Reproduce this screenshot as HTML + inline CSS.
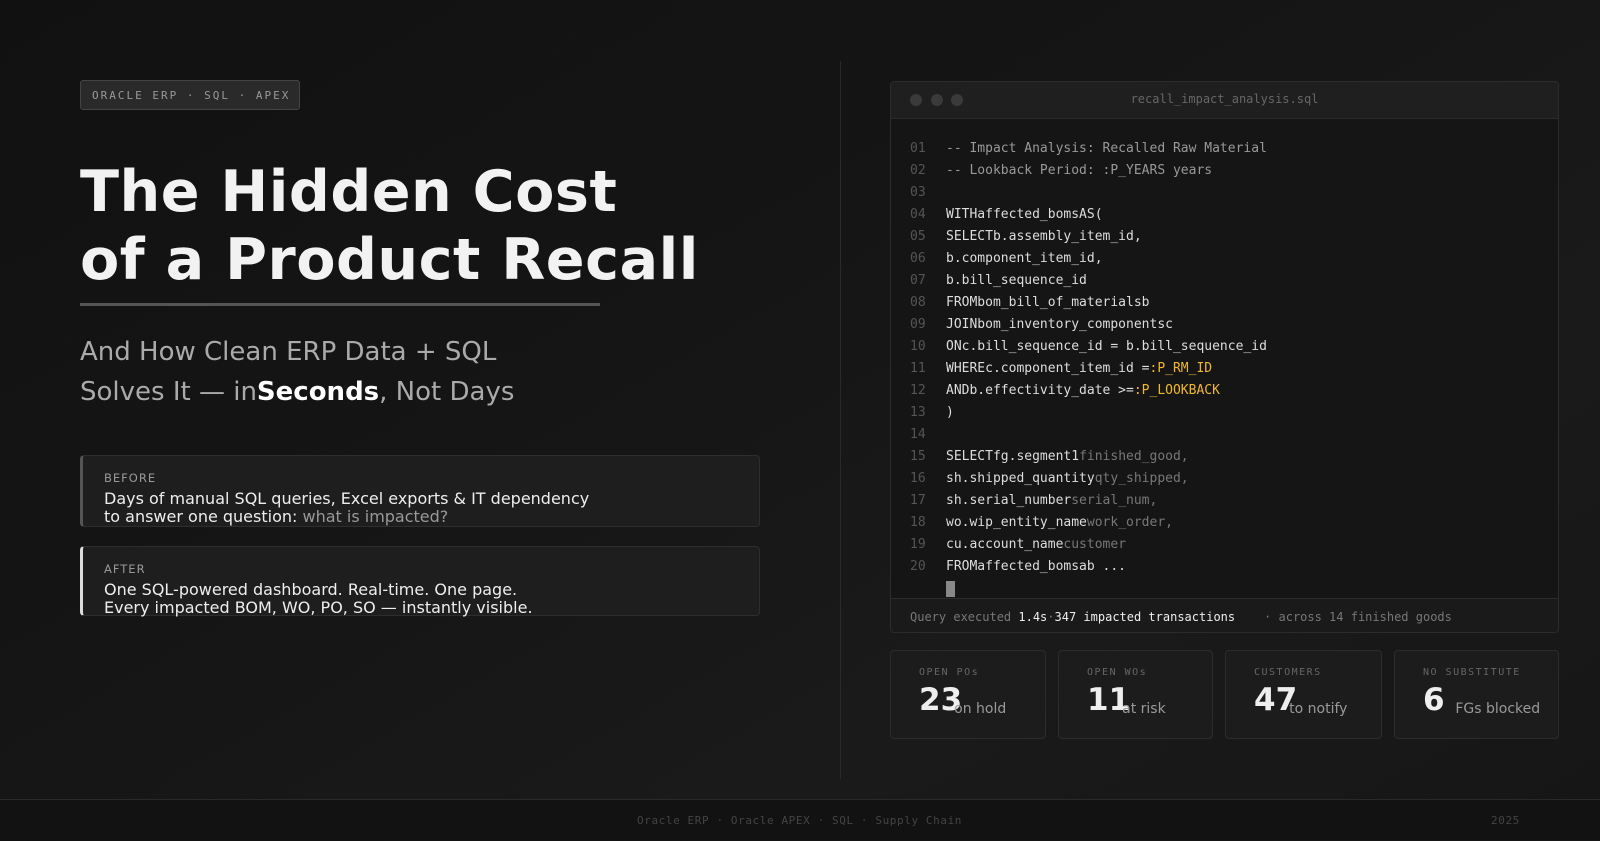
<!DOCTYPE html>
<html><head><meta charset="utf-8"><style>
*{margin:0;padding:0;box-sizing:border-box}
body{width:1600px;height:840px;overflow:hidden;background:linear-gradient(150deg,#111 0%,#151515 40%,#1a1a1a 70%,#161616 100%);font-family:"DejaVu Sans","Liberation Sans",sans-serif;color:#eee;position:relative}
.abs{position:absolute}
.mono{font-family:"DejaVu Sans Mono","Liberation Mono",monospace}
.badge{left:80px;top:80px;width:220px;height:30px;border:1px solid #444;background:#2a2a2a;border-radius:3px;color:#999;font-size:11px;letter-spacing:2.0px;line-height:29px;padding-left:11px;white-space:nowrap}
h1{position:absolute;left:80px;top:158px;font-size:57.2px;font-weight:bold;line-height:68px;color:#f2f2f2;letter-spacing:0.5px;white-space:nowrap}
.rule{left:80px;top:303px;width:520px;height:3px;background:#555}
.sub{left:80px;top:332px;font-size:26px;line-height:40px;color:#aaa}
.sub b{color:#fff}
.box{left:80px;width:680px;border:1px solid #2e2e2e;border-radius:4px;background:#1e1e1e;padding:15px 0 0 21px}
.box .l{font-size:11.5px;letter-spacing:1px;color:#999;margin-bottom:5px}
.box .t{font-size:16px;line-height:18px;color:#eee}
.div{left:840px;top:61px;width:1px;height:718px;background:#2a2a2a}
.win{left:890px;top:81px;width:669px;height:552px;border:1px solid #2c2c2c;border-radius:4px;background:#151515;overflow:hidden}
.hdr{height:37px;background:#1f1f1f;border-bottom:1px solid #2a2a2a;position:relative}
.dot{position:absolute;top:12px;width:12px;height:12px;border-radius:50%;background:#3a3a3a}
.code{position:absolute;left:19px;top:56px;font-size:13px;line-height:22px;color:#ddd;white-space:pre}
.code .n{color:#555;display:inline-block;width:36px}
.code .c{color:#999}.code .y{color:#f0b830}.code .g{color:#777}
.stat{position:absolute;left:0;top:516px;width:669px;height:36px;border-top:1px solid #2c2c2c;background:#1a1a1a;font-size:12px;line-height:36px;padding-left:19px;color:#777;white-space:pre}
.stat b{color:#eee;font-weight:normal}
.card{top:650px;height:89px;border:1px solid #2c2c2c;border-radius:4px;background:#1c1c1c;padding:16px 0 0 28px}
.card .l{font-size:10px;letter-spacing:1.5px;color:#666;font-family:"DejaVu Sans Mono",monospace}
.card .v{font-size:31px;font-weight:bold;color:#eee;margin-top:4px;white-space:nowrap}
.card .v span{font-size:14px;font-weight:normal;color:#999;position:relative;top:3px}
.foot{left:0;top:799px;width:1600px;height:41px;border-top:1px solid #2a2a2a;background:#121212;font-size:11px;color:#444;line-height:41px;letter-spacing:0.6px}
</style></head><body>
<div class="abs badge mono">ORACLE ERP · SQL · APEX</div>
<h1>The Hidden Cost<br>of a Product Recall</h1>
<div class="abs rule"></div>
<div class="abs sub">And How Clean ERP Data + SQL<br>Solves It — in<b>Seconds</b>, Not Days</div>
<div class="abs box" style="top:455px;height:72px;border-left:3px solid #555"><div class="l">BEFORE</div><div class="t">Days of manual SQL queries, Excel exports &amp; IT dependency<br>to answer one question: <span style="color:#999">what is impacted?</span></div></div>
<div class="abs box" style="top:546px;height:70px;border-left:3px solid #ddd"><div class="l">AFTER</div><div class="t">One SQL-powered dashboard. Real-time. One page.<br>Every impacted BOM, WO, PO, SO — instantly visible.</div></div>
<div class="abs div"></div>
<div class="abs win">
<div class="hdr"><div class="dot" style="left:19px"></div><div class="dot" style="left:40px"></div><div class="dot" style="left:60px"></div><div class="mono" style="position:absolute;left:0;right:0;text-align:center;top:10px;font-size:12px;color:#666">recall_impact_analysis.sql</div></div>
<div class="code mono"><span class="n">01</span><span class="c">-- Impact Analysis: Recalled Raw Material</span>
<span class="n">02</span><span class="c">-- Lookback Period: :P_YEARS years</span>
<span class="n">03</span>
<span class="n">04</span>WITHaffected_bomsAS(
<span class="n">05</span>SELECTb.assembly_item_id,
<span class="n">06</span>b.component_item_id,
<span class="n">07</span>b.bill_sequence_id
<span class="n">08</span>FROMbom_bill_of_materialsb
<span class="n">09</span>JOINbom_inventory_componentsc
<span class="n">10</span>ONc.bill_sequence_id = b.bill_sequence_id
<span class="n">11</span>WHEREc.component_item_id =<span class="y">:P_RM_ID</span>
<span class="n">12</span>ANDb.effectivity_date &gt;=<span class="y">:P_LOOKBACK</span>
<span class="n">13</span>)
<span class="n">14</span>
<span class="n">15</span>SELECTfg.segment1<span class="g">finished_good,</span>
<span class="n">16</span>sh.shipped_quantity<span class="g">qty_shipped,</span>
<span class="n">17</span>sh.serial_number<span class="g">serial_num,</span>
<span class="n">18</span>wo.wip_entity_name<span class="g">work_order,</span>
<span class="n">19</span>cu.account_name<span class="g">customer</span>
<span class="n">20</span>FROMaffected_bomsab ...
<span class="n"></span><span style="display:inline-block;width:9px;height:16px;background:#888;vertical-align:middle"></span></div>
<div class="stat mono">Query executed <b>1.4s</b>·<b>347 impacted transactions</b>    · across 14 finished goods</div>
</div>
<div class="abs card" style="left:890px;width:156px"><div class="l">OPEN POs</div><div class="v">23<span style="margin-left:-8px">on hold</span></div></div>
<div class="abs card" style="left:1058px;width:155px"><div class="l">OPEN WOs</div><div class="v">11<span style="margin-left:-8px">at risk</span></div></div>
<div class="abs card" style="left:1225px;width:157px"><div class="l">CUSTOMERS</div><div class="v">47<span style="margin-left:-8px">to notify</span></div></div>
<div class="abs card" style="left:1394px;width:165px"><div class="l">NO SUBSTITUTE</div><div class="v">6 <span>FGs blocked</span></div></div>
<div class="abs foot mono"><span style="position:absolute;left:637px">Oracle ERP · Oracle APEX · SQL · Supply Chain</span><span style="position:absolute;left:1491px">2025</span></div>
</body></html>
